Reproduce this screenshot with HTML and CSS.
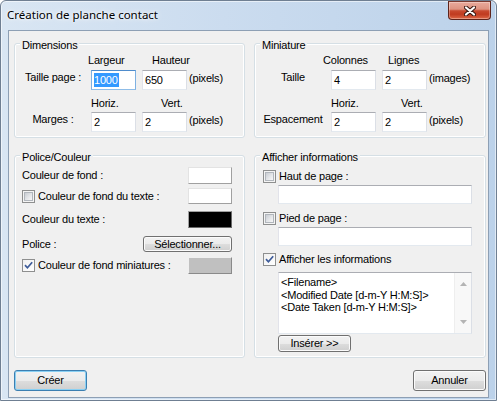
FILE: index.html
```html
<!DOCTYPE html>
<html lang="fr">
<head>
<meta charset="utf-8">
<title>Création de planche contact</title>
<link rel="stylesheet" href="styles.css">
</head>
<body>
<div class="window">
  <div class="titlebar">
    <div class="title">Création de planche contact</div>
    <div class="close">
      <svg width="12" height="10" viewBox="0 0 12 10">
        <path d="M2 1.5 L10 8.5 M10 1.5 L2 8.5" stroke="#3b1a14" stroke-width="4.2" stroke-linecap="round"/>
        <path d="M2 1.5 L10 8.5 M10 1.5 L2 8.5" stroke="#ffffff" stroke-width="2.2" stroke-linecap="round"/>
      </svg>
    </div>
  </div>
  <div class="client">
    <div class="row2 top">
      <div class="group">
        <div class="legend">Dimensions</div>
        <div class="grid4">
          <span></span>
          <span class="hdr off-m3">Largeur</span>
          <span class="hdr off-p10">Hauteur</span>
          <span></span>
          <span class="lbl">Taille page :</span>
          <div class="edit focus"><span class="sel">1000</span></div>
          <div class="edit">650</div>
          <span class="unit">(pixels)</span>
          <span></span>
          <span class="hdr2">Horiz.</span>
          <span class="hdr2 off-p19">Vert.</span>
          <span></span>
          <span class="lbl">Marges :</span>
          <div class="edit">2</div>
          <div class="edit">2</div>
          <span class="unit">(pixels)</span>
        </div>
      </div>
      <div class="group">
        <div class="legend">Miniature</div>
        <div class="grid4">
          <span></span>
          <span class="hdr off-m8">Colonnes</span>
          <span class="hdr off-p6">Lignes</span>
          <span></span>
          <span class="lbl">Taille</span>
          <div class="edit">4</div>
          <div class="edit">2</div>
          <span class="unit">(images)</span>
          <span></span>
          <span class="hdr2">Horiz.</span>
          <span class="hdr2 off-p19">Vert.</span>
          <span></span>
          <span class="lbl">Espacement</span>
          <div class="edit">2</div>
          <div class="edit">2</div>
          <span class="unit">(pixels)</span>
        </div>
      </div>
    </div>
    <div class="row2 bottom">
      <div class="group">
        <div class="legend">Police/Couleur</div>
        <div class="pbody">
          <div class="prow r1"><span>Couleur de fond :</span><span class="swatch white"></span></div>
          <div class="prow r2"><span class="cbl"><span class="cb"></span>Couleur de fond du texte :</span><span class="swatch white short"></span></div>
          <div class="prow r3"><span>Couleur du texte :</span><span class="swatch black"></span></div>
          <div class="prow r4"><span>Police :</span><span class="btn pick">Sélectionner...</span></div>
          <div class="prow r5"><span class="cbl"><span class="cb on"><svg width="11" height="11" viewBox="0 0 11 11"><path d="M2 5.2 L4.4 7.8 L9.2 2.2" fill="none" stroke="#3d5b99" stroke-width="1.7"/></svg></span>Couleur de fond miniatures :</span><span class="swatch gray"></span></div>
        </div>
      </div>
      <div class="group">
        <div class="legend">Afficher informations</div>
        <div class="ibody">
          <div class="cbl cbrow m6"><span class="cb"></span>Haut de page :</div>
          <div class="edit wide"></div>
          <div class="cbl cbrow m8"><span class="cb"></span>Pied de page :</div>
          <div class="edit wide"></div>
          <div class="cbl cbrow m7"><span class="cb on"><svg width="11" height="11" viewBox="0 0 11 11"><path d="M2 5.2 L4.4 7.8 L9.2 2.2" fill="none" stroke="#3d5b99" stroke-width="1.7"/></svg></span>Afficher les informations</div>
          <div class="memo">
            <div class="memo-text">&lt;Filename&gt;<br>&lt;Modified Date [d-m-Y H:M:S]&gt;<br>&lt;Date Taken [d-m-Y H:M:S]&gt;</div>
            <div class="vscroll">
              <svg width="7" height="4" viewBox="0 0 7 4"><path d="M0 4 L3.5 0 L7 4 Z" fill="#b4b4b4"/></svg>
              <svg width="7" height="4" viewBox="0 0 7 4"><path d="M0 0 L3.5 4 L7 0 Z" fill="#b4b4b4"/></svg>
            </div>
          </div>
          <div class="btn insert">Insérer &gt;&gt;</div>
        </div>
      </div>
    </div>
    <div class="footer">
      <div class="btn big default">Créer</div>
      <div class="btn big">Annuler</div>
    </div>
  </div>
</div>
</body>
</html>
```
FILE: styles.css
```css
html, body {
  margin: 0;
  padding: 0;
  background: #ffffff;
}
body {
  font-family: "Liberation Sans", Arial, sans-serif;
  font-size: 11px;
  line-height: 13px;
  letter-spacing: -0.2px;
  color: #000;
}
.window {
  width: 497px;
  height: 401px;
  box-sizing: border-box;
  border: 1px solid #6f7f92;
  border-radius: 6px 6px 0 0;
  background: linear-gradient(90deg, #d9e6f3 0%, #cbdcef 45%, #bcd2ea 100%);
  box-shadow: inset 0 0 0 1px rgba(255,255,255,0.55);
  padding: 0 7px 2px 7px;
  display: flex;
  flex-direction: column;
}
.titlebar {
  flex: none;
  height: 29px;
  display: flex;
  justify-content: space-between;
  align-items: flex-start;
}
.title {
  font-family: "Noto Sans", "Open Sans", sans-serif;
  font-size: 11.5px;
  line-height: 16px;
  letter-spacing: 0;
  margin: 6px 0 0 -1px;
  text-shadow: 0 0 7px #ffffff, 0 0 3px #ffffff;
}
.close {
  width: 43px;
  height: 19px;
  margin-right: -2px;
  box-sizing: border-box;
  border: 1px solid #5e241b;
  border-top-color: #7a3a30;
  border-radius: 0 0 4px 4px;
  background: linear-gradient(#e9aa9c 0%, #dd9381 42%, #c84a2f 52%, #c03b20 72%, #d25738 90%, #e27252 100%);
  box-shadow: inset 0 0 0 1px rgba(255,255,255,0.3);
  display: flex;
  align-items: center;
  justify-content: center;
}
.client {
  flex: none;
  height: 368px;
  box-sizing: border-box;
  border: 1px solid #8d9fb4;
  background: #f0f0f0;
  padding: 12px 2px 0 5px;
  display: flex;
  flex-direction: column;
}
.row2 {
  display: grid;
  grid-template-columns: 231px 232px;
  column-gap: 9px;
}
.top { height: 95px; }
.bottom { height: 203px; margin-top: 17px; }
.group {
  box-sizing: border-box;
  border: 1px solid #d5dfe5;
  border-radius: 3px;
  box-shadow: inset 0 0 0 1px #ffffff;
  display: flex;
  flex-direction: column;
}
.legend {
  align-self: flex-start;
  height: 13px;
  margin: -5px 0 0 5px;
  padding: 0 2px;
  background: #f0f0f0;
  white-space: nowrap;
}
.grid4 {
  display: grid;
  grid-template-columns: 76px 51px 47px auto;
  grid-template-rows: 16px 20px 22px 20px;
  margin-top: 2px;
  white-space: nowrap;
}
.hdr { align-self: start; }
.hdr2 { align-self: start; margin-top: 7px; }
.off-m3 { margin-left: -3px; }
.off-m8 { margin-left: -8px; }
.off-p6 { margin-left: 6px; }
.off-p10 { margin-left: 10px; }
.off-p19 { margin-left: 19px; }
.lbl {
  align-self: start;
  text-align: center;
  padding-top: 1px;
}
.unit {
  align-self: start;
  padding-top: 2px;
}
.edit {
  width: 45px;
  height: 20px;
  box-sizing: border-box;
  border: 1px solid;
  border-color: #abadb3 #dbdfe6 #e3e9ef #e2e3ea;
  background: #ffffff;
  padding: 0 2px;
  line-height: 18px;
  white-space: nowrap;
}
.edit.focus {
  border-color: #4f8ccc #7eb1e2 #8fbde8 #7eb1e2;
}
.sel {
  background: #3399ff;
  color: #ffffff;
  padding: 1px 1px 1px 0;
}
.pbody {
  padding: 3px 12px 0 7px;
}
.prow {
  display: flex;
  justify-content: space-between;
  align-items: center;
  height: 17px;
  white-space: nowrap;
}
.r2 { height: 16px; margin-top: 4px; }
.r3 { margin-top: 7px; }
.r4 { height: 16px; margin-top: 8px; }
.r5 { margin-top: 5px; }
.cbl {
  display: flex;
  align-items: center;
  gap: 3px;
  white-space: nowrap;
}
.cb {
  width: 13px;
  height: 13px;
  box-sizing: border-box;
  border: 1px solid #8e8f8f;
  background: #f4f4f4;
  padding: 1px;
  flex: none;
}
.cb::before {
  content: "";
  display: block;
  width: 9px;
  height: 9px;
  box-sizing: border-box;
  border: 1px solid #b1b6bc;
  background: linear-gradient(135deg, #c9cdd3 0%, #e4e6e9 55%, #f7f7f8 100%);
}
.cb.on {
  padding: 0;
  background: linear-gradient(135deg, #f0f0f0, #ffffff);
}
.cb.on::before { display: none; }
.cb.on svg { display: block; }
.swatch {
  width: 44px;
  height: 17px;
  box-sizing: border-box;
  border: 1px solid;
  border-color: #e3e3e3 #a0a0a0 #a0a0a0 #e3e3e3;
  flex: none;
}
.swatch.short { height: 16px; }
.swatch.white { background: #ffffff; }
.swatch.black { background: #000000; border-color: #a0a0a0 #696969 #696969 #a0a0a0; }
.swatch.gray { background: #c0c0c0; border-color: #f0f0f0 #8a8a8a #8a8a8a #f0f0f0; }
.btn {
  display: flex;
  align-items: center;
  justify-content: center;
  box-sizing: border-box;
  border: 1px solid #707070;
  border-radius: 3px;
  background: linear-gradient(#f2f2f2 0%, #ebebeb 50%, #dddddd 51%, #cfcfcf 100%);
  box-shadow: inset 0 0 0 1px #fbfbfb;
  white-space: nowrap;
}
.pick { width: 89px; height: 16px; }
.ibody {
  padding: 6px 13px 0 8px;
  display: flex;
  flex-direction: column;
}
.cbrow { height: 13px; }
.m6 { margin-top: 0; }
.m8 { margin-top: 8px; }
.m7 { margin-top: 7px; }
.edit.wide {
  width: 194px;
  height: 19px;
  margin: 2px 0 0 15px;
}
.memo {
  width: 194px;
  height: 62px;
  margin: 6px 0 0 15px;
  box-sizing: border-box;
  border: 1px solid;
  border-color: #abadb3 #dbdfe6 #e3e9ef #e2e3ea;
  background: #ffffff;
  display: flex;
}
.memo-text {
  flex: 1;
  padding: 3px 0 0 2px;
  line-height: 12.5px;
  white-space: nowrap;
}
.vscroll {
  width: 17px;
  flex: none;
  background: #f8f8f8;
  border-left: 1px solid #eeeeee;
  box-sizing: border-box;
  display: flex;
  flex-direction: column;
  justify-content: space-between;
  align-items: center;
  padding: 9px 0 9px;
}
.vscroll svg { display: block; }
.insert {
  width: 73px;
  height: 17px;
  margin: 1px 0 0 15px;
}
.footer {
  margin-top: 12px;
  display: flex;
  justify-content: space-between;
}
.big {
  width: 73px;
  height: 21px;
}
.default {
  border-color: #3c7fb1;
  box-shadow: inset 0 0 0 1px #8ad0f3;
}
```
